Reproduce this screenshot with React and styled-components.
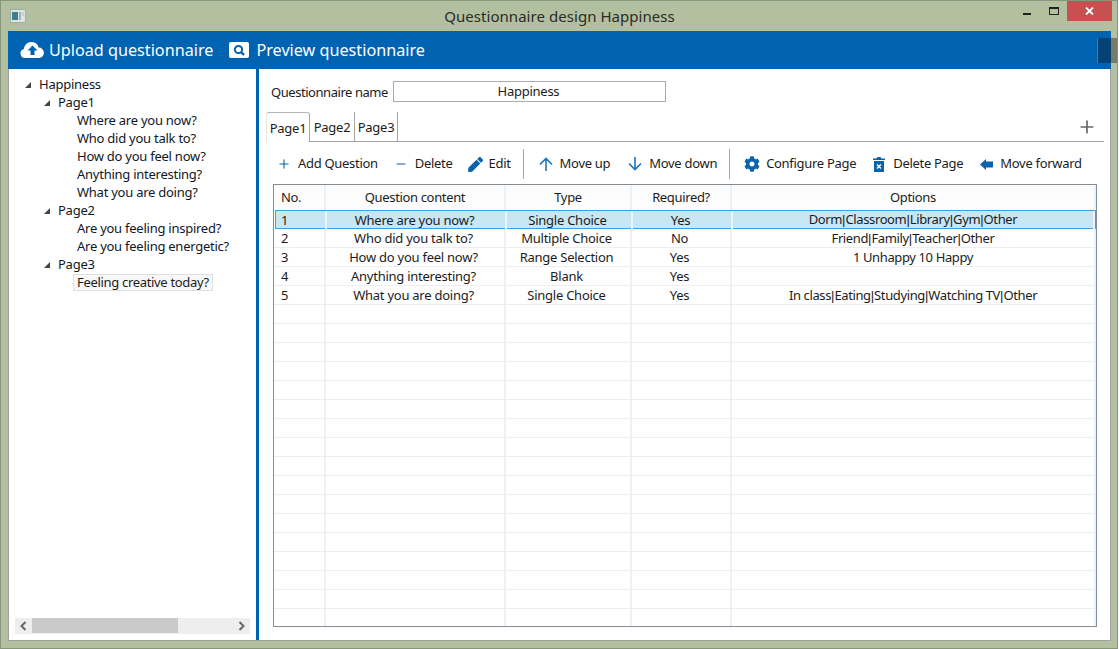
import React from "react";
import styled, { createGlobalStyle } from "styled-components";
import { FaCog, FaPen } from "react-icons/fa";
import { Plus, Minus } from "lucide-react";

const Global = createGlobalStyle`
  html, body { margin: 0; padding: 0; background: #fff; }
  body { font-family: "Noto Sans", "Open Sans", sans-serif; font-size: 13px; letter-spacing: -0.25px; color: #1c1c1c; }
  * { box-sizing: border-box; }
`;

const Frame = styled.div`
  position: relative;
  width: 1118px;
  height: 649px;
  background: #b3c0a0;
  border: 1px solid #87957c;
  overflow: hidden;
  display: flex;
  flex-direction: column;
`;
const TitleBar = styled.header`
  height: 30px;
  display: flex;
  align-items: flex-start;
  flex: none;
`;
const AppIcon = styled.svg`
  width: 16px; height: 14px; margin: 8px 0 0 9px; flex: none;
`;
const Title = styled.div`
  flex: 1;
  text-align: center;
  font-size: 15px;
  letter-spacing: 0.05px;
  line-height: 30px;
  color: #2b2b2b;
  padding-left: 70px;
`;
const WinButtons = styled.div`
  display: flex;
  align-items: flex-start;
  flex: none;
  margin-right: 5px;
`;
const WinIcon = styled.span`
  display: block;
  flex: none;
`;
const MinIcon = styled(WinIcon)`
  width: 8px; height: 2px; background: #222; margin: 12px 0 0 0;
`;
const MaxIcon = styled(WinIcon)`
  width: 10px; height: 8px; border: 1px solid #222; border-top-width: 2px; margin: 6px 8px 0 18px;
`;
const CloseBtn = styled.div`
  width: 45px; height: 20px; background: #c75050; display: flex; align-items: center; justify-content: center;
`;
const Workspace = styled.div`
  flex: 1;
  margin: 0 6px 7px 7px;
  border: 1px solid #a0a0a0;
  border-top: none;
  display: flex;
  flex-direction: column;
  min-height: 0;
  background: #fff;
`;
const TopBar = styled.div`
  height: 38px;
  margin: 0 -1px;
  background: #0063b1;
  flex: none;
  display: flex;
  align-items: center;
  padding: 0 0 1px 12px;
  color: #fff;
  font-size: 16.2px;
  letter-spacing: 0;
`;
const TopItem = styled.div`
  display: flex;
  align-items: center;
  gap: ${p => p.$gap}px;
  margin-right: 16px;
`;
const Body = styled.div`
  flex: 1;
  display: flex;
  min-height: 0;
`;
const TreePanel = styled.aside`
  width: 247px;
  flex: none;
  display: flex;
  flex-direction: column;
  padding: 7px 6px 6px 6px;
`;
const Tree = styled.div`
  flex: 1;
  min-height: 0;
`;
const TreeRow = styled.div`
  height: 18px;
  line-height: 18px;
  display: flex;
  align-items: center;
  padding-left: ${p => p.$level * 19 + 10}px;
  white-space: nowrap;
  color: #101828;
`;
const Caret = styled.span`
  width: 0; height: 0; flex: none;
  border-style: solid;
  border-width: 0 0 6px 6px;
  border-color: transparent transparent #444 transparent;
  margin-right: 8px;
`;
const CaretSpace = styled.span`
  width: 14px; flex: none;
`;
const TreeLabel = styled.span`
  display: block;
  line-height: 15px;
  margin-top: -2px;
  letter-spacing: ${p => (p.$selected ? -0.32 : -0.25)}px;
  padding: 0 ${p => (p.$selected ? 3 : 0)}px;
  margin-left: ${p => (p.$selected ? -4 : 0)}px;
  height: ${p => (p.$selected ? 17 : 15)}px;
  background: ${p => (p.$selected ? "#f7f7f7" : "transparent")};
  border: ${p => (p.$selected ? "1px solid #e0e0e0" : "none")};
  color: ${p => (p.$selected ? "#1c1c1c" : "inherit")};
`;
const HScroll = styled.div`
  height: 16px;
  background: #eeeeee;
  display: flex;
  align-items: center;
  flex: none;
`;
const Thumb = styled.div`
  width: 146px; height: 15px; background: #cacaca; align-self: flex-start; flex: none;
`;
const ScrollArrow = styled.svg`
  width: 17px; height: 16px; flex: none;
`;
const ScrollFill = styled.div`
  flex: 1;
`;
const Splitter = styled.div`
  width: 3px; flex: none; background: #0063b1;
`;
const Main = styled.main`
  flex: 1;
  min-width: 0;
  display: flex;
  flex-direction: column;
  padding: 12px 6px 13px 7px;
`;
const NameRow = styled.div`
  display: flex;
  align-items: center;
  height: 21px;
  padding-left: 5px;
  gap: 5px;
  flex: none;
`;
const NameLabel = styled.label`
  white-space: nowrap;
  letter-spacing: -0.45px;
`;
const NameInput = styled.div`
  width: 273px;
  height: 21px;
  border: 1px solid #ababab;
  text-align: center;
  line-height: 19px;
  padding-right: 2px;
`;
const TabStrip = styled.div`
  margin-top: 10px;
  height: 30px;
  display: flex;
  align-items: stretch;
  border-bottom: 1px solid #a4a4a4;
  flex: none;
`;
const Tab = styled.div`
  padding: 0 3px;
  display: flex;
  align-items: center;
  justify-content: center;
  width: ${p => p.$w}px;
  border-right: 1px solid #a4a4a4;
  ${p => p.$active ? `
    border-top: 1px solid #b5b5b5;
    border-left: 1px solid #e4e4e4;
    border-top-left-radius: 3px;
    border-top-right-radius: 3px;
    background: #fff;
    margin-bottom: -1px;
  ` : ""}
`;
const TabAdd = styled.div`
  margin-left: auto;
  margin-right: 7px;
  color: #666;
  display: flex;
  align-items: center;
`;
const Tools = styled.div`
  height: 36px;
  margin-top: 4px;
  display: flex;
  align-items: center;
  flex: none;
  padding-left: 11px;
`;
const ToolBtn = styled.div`
  display: flex;
  align-items: center;
  gap: ${p => p.$gap}px;
  margin-right: ${p => p.$mr}px;
  white-space: nowrap;
  color: #1c1c1c;
`;
const ToolLabel = styled.span`
  margin-top: -2px;
  letter-spacing: -0.3px;
`;
const ToolIcon = styled.span`
  display: flex;
  align-items: center;
  justify-content: center;
  width: ${p => p.$w}px;
  color: #0b63ad;
  flex: none;
`;
const Sep = styled.div`
  width: 1px;
  height: 30px;
  background: #a6a6a6;
  flex: none;
  margin-right: ${p => p.$mr}px;
`;
const TableBox = styled.div`
  margin-top: 2px;
  margin-left: 7px;
  width: 824px;
  flex: 1;
  min-height: 0;
  border: 1px solid #868b94;
  overflow: hidden;
  background: #fff;
`;
const Grid = styled.div`
  display: grid;
  grid-template-columns: 52px 180px 126px 100px 364px;
`;
const Header = styled(Grid)`
  height: 25px;
  background: #fcfcfc;
  letter-spacing: -0.35px;
`;
const HeadCell = styled.div`
  display: flex;
  align-items: center;
  justify-content: ${p => (p.$left ? "flex-start" : "center")};
  padding: 0 0 2px ${p => (p.$left ? 7 : 0)}px;
  border-right: 2px solid #eaf1fa;
`;
const Row = styled(Grid)`
  height: 19px;
  border-bottom: 1px solid #eeeeee;
  ${p => p.$selected ? `
    background: #c9e6f5;
    border: 1px solid #3f9fdc;
    margin-left: 1px;
    width: 821px;
    grid-template-columns: 51px 180px 126px 100px 362px;
  ` : ""}
`;
const Cell = styled.div`
  display: flex;
  align-items: center;
  justify-content: ${p => (p.$left ? "flex-start" : "center")};
  padding: 0 ${p => p.$pr || 0}px ${p => (p.$sel ? 1 : 0)}px ${p => (p.$left ? (p.$sel ? 5 : 7) : 0)}px;
  border-right: 2px solid ${p => (p.$sel ? "#eaf5fb" : "#eaf1fa")};
  white-space: nowrap;
  line-height: 16px;
`;
const OptionText = styled.span`
  letter-spacing: -0.38px;
`;
const Pipe = styled.span`
  font-family: "Liberation Sans", sans-serif;
  letter-spacing: 0;
`;
const Overlay = styled.div`
  position: absolute;
  left: 1096px;
  top: 37px;
  width: 22px;
  height: 25px;
  background: rgba(10, 10, 20, 0.38);
  border-left: 1px solid #2a8a9a;
`;

const rows = [
  ["1", "Where are you now?", "Single Choice", "Yes", "Dorm|Classroom|Library|Gym|Other"],
  ["2", "Who did you talk to?", "Multiple Choice", "No", "Friend|Family|Teacher|Other"],
  ["3", "How do you feel now?", "Range Selection", "Yes", "1 Unhappy 10 Happy"],
  ["4", "Anything interesting?", "Blank", "Yes", ""],
  ["5", "What you are doing?", "Single Choice", "Yes", "In class|Eating|Studying|Watching TV|Other"],
];
const emptyRows = Array.from({ length: 18 }, (_, i) => i);

const tree = [
  { level: 0, label: "Happiness", caret: true },
  { level: 1, label: "Page1", caret: true },
  { level: 2, label: "Where are you now?" },
  { level: 2, label: "Who did you talk to?" },
  { level: 2, label: "How do you feel now?" },
  { level: 2, label: "Anything interesting?" },
  { level: 2, label: "What you are doing?" },
  { level: 1, label: "Page2", caret: true },
  { level: 2, label: "Are you feeling inspired?" },
  { level: 2, label: "Are you feeling energetic?" },
  { level: 1, label: "Page3", caret: true },
  { level: 2, label: "Feeling creative today?", selected: true },
];

const withPipes = text =>
  text.split("|").map((part, i) => (
    <React.Fragment key={i}>
      {i > 0 && <Pipe>|</Pipe>}
      {part}
    </React.Fragment>
  ));

const PreviewIcon = () => (
  <svg width="20" height="16" viewBox="0 0 20 16">
    <rect x="0" y="0" width="20" height="16" rx="2" fill="#fff" />
    <circle cx="9.500" cy="7.500" r="3.600" fill="none" stroke="#0063b1" strokeWidth="2" />
    <path d="M12 10l3 3" stroke="#0063b1" strokeWidth="2.400" />
  </svg>
);
const UploadIcon = () => (
  <svg width="24" height="16" viewBox="0 0 24 16">
    <path d="M5 16a4.600 4.600 0 0 1-1.200-9A7.500 7.500 0 0 1 11.500 0a7 7 0 0 1 7 5.600A5.200 5.200 0 0 1 19 16z" fill="#fff" />
    <path d="M12.500 3.500l5 5h-3v4.500h-4V8.500h-3z" fill="#0063b1" />
  </svg>
);
const TrashIcon = () => (
  <svg width="12" height="15" viewBox="0 0 12 15">
    <path d="M0 1.500h3.500L4.500 0h3l1 1.500H12V3H0z" fill="#0b63ad" />
    <path d="M1 4h10v11H1z" fill="#0b63ad" />
    <path d="M4 7.500l4 4M8 7.500l-4 4" stroke="#fff" strokeWidth="1.400" />
  </svg>
);
const ForwardIcon = () => (
  <svg width="13" height="11" viewBox="0 0 13 11">
    <path d="M0 5.500L6 0v2.500h7v6H6V11z" fill="#0b63ad" />
  </svg>
);
const UpIcon = () => (
  <svg width="14" height="14" viewBox="0 0 14 14">
    <path d="M7 14V1.500M1 7.500l6-6 6 6" fill="none" stroke="#1f74b8" strokeWidth="1.600" />
  </svg>
);
const DownIcon = () => (
  <svg width="14" height="14" viewBox="0 0 14 14">
    <path d="M7 0v12.500M1 6.500l6 6 6-6" fill="none" stroke="#1f74b8" strokeWidth="1.600" />
  </svg>
);

export default function App() {
  return (
    <>
      <Global />
      <Frame>
        <TitleBar>
          <AppIcon viewBox="0 0 16 14">
            <rect x="0.500" y="0.500" width="15" height="13" fill="#dfe5e0" stroke="#a4aca4" />
            <rect x="2" y="3" width="6" height="8" fill="#3e7f92" />
            <rect x="9" y="3" width="2" height="8" fill="#9fb2b0" />
            <rect x="12" y="3" width="2" height="4" fill="#c4d0cc" />
          </AppIcon>
          <Title>Questionnaire design Happiness</Title>
          <WinButtons>
            <MinIcon />
            <MaxIcon />
            <CloseBtn>
              <svg width="9" height="8" viewBox="0 0 9 8">
                <path d="M1 0.500l7 7M8 0.500l-7 7" stroke="#fff" strokeWidth="1.800" />
              </svg>
            </CloseBtn>
          </WinButtons>
        </TitleBar>
        <Workspace>
          <TopBar>
            <TopItem $gap={5}>
              <UploadIcon />
              <span>Upload questionnaire</span>
            </TopItem>
            <TopItem $gap={7}>
              <PreviewIcon />
              <span>Preview questionnaire</span>
            </TopItem>
          </TopBar>
          <Body>
            <TreePanel>
              <Tree>
                {tree.map((n, i) => (
                  <TreeRow key={i} $level={n.level}>
                    {n.caret ? <Caret /> : <CaretSpace />}
                    <TreeLabel $selected={n.selected}>{n.label}</TreeLabel>
                  </TreeRow>
                ))}
              </Tree>
              <HScroll>
                <ScrollArrow viewBox="0 0 17 16">
                  <path d="M10.500 4l-4 4 4 4" fill="none" stroke="#666" strokeWidth="2" />
                </ScrollArrow>
                <Thumb />
                <ScrollFill />
                <ScrollArrow viewBox="0 0 17 16">
                  <path d="M6.500 4l4 4-4 4" fill="none" stroke="#666" strokeWidth="2" />
                </ScrollArrow>
              </HScroll>
            </TreePanel>
            <Splitter />
            <Main>
              <NameRow>
                <NameLabel>Questionnaire name</NameLabel>
                <NameInput>Happiness</NameInput>
              </NameRow>
              <TabStrip>
                <Tab $active $w={44}>Page1</Tab>
                <Tab $w={45}>Page2</Tab>
                <Tab $w={43}>Page3</Tab>
                <TabAdd><Plus size={20} strokeWidth={2} /></TabAdd>
              </TabStrip>
              <Tools>
                <ToolBtn $gap={7} $mr={16}><ToolIcon $w={14}><Plus size={18} strokeWidth={1.900} /></ToolIcon><ToolLabel>Add Question</ToolLabel></ToolBtn>
                <ToolBtn $gap={7} $mr={15}><ToolIcon $w={14}><Minus size={18} strokeWidth={1.900} /></ToolIcon><ToolLabel>Delete</ToolLabel></ToolBtn>
                <ToolBtn $gap={6} $mr={12}><ToolIcon $w={15}><FaPen size={15} /></ToolIcon><ToolLabel>Edit</ToolLabel></ToolBtn>
                <Sep $mr={15} />
                <ToolBtn $gap={7} $mr={18}><ToolIcon $w={14}><UpIcon /></ToolIcon><ToolLabel>Move up</ToolLabel></ToolBtn>
                <ToolBtn $gap={7} $mr={12}><ToolIcon $w={14}><DownIcon /></ToolIcon><ToolLabel>Move down</ToolLabel></ToolBtn>
                <Sep $mr={14} />
                <ToolBtn $gap={6} $mr={17}><ToolIcon $w={16}><FaCog size={16} /></ToolIcon><ToolLabel>Configure Page</ToolLabel></ToolBtn>
                <ToolBtn $gap={8} $mr={17}><ToolIcon $w={12}><TrashIcon /></ToolIcon><ToolLabel>Delete Page</ToolLabel></ToolBtn>
                <ToolBtn $gap={7} $mr={0}><ToolIcon $w={13}><ForwardIcon /></ToolIcon><ToolLabel>Move forward</ToolLabel></ToolBtn>
              </Tools>
              <TableBox>
                <Header>
                  <HeadCell $left>No.</HeadCell>
                  <HeadCell>Question content</HeadCell>
                  <HeadCell>Type</HeadCell>
                  <HeadCell>Required?</HeadCell>
                  <HeadCell>Options</HeadCell>
                </Header>
                {rows.map((r, i) => (
                  <Row key={i} $selected={i === 0}>
                    {r.map((c, j) => (
                      <Cell key={j} $left={j === 0} $sel={i === 0} $pr={j >= 1 && j <= 3 ? 3 : 0}>
                        {j === 4 ? <OptionText>{withPipes(c)}</OptionText> : <span>{c}</span>}
                      </Cell>
                    ))}
                  </Row>
                ))}
                {emptyRows.map(i => (
                  <Row key={i}>
                    <Cell /><Cell /><Cell /><Cell /><Cell />
                  </Row>
                ))}
              </TableBox>
            </Main>
          </Body>
        </Workspace>
        <Overlay />
      </Frame>
    </>
  );
}
